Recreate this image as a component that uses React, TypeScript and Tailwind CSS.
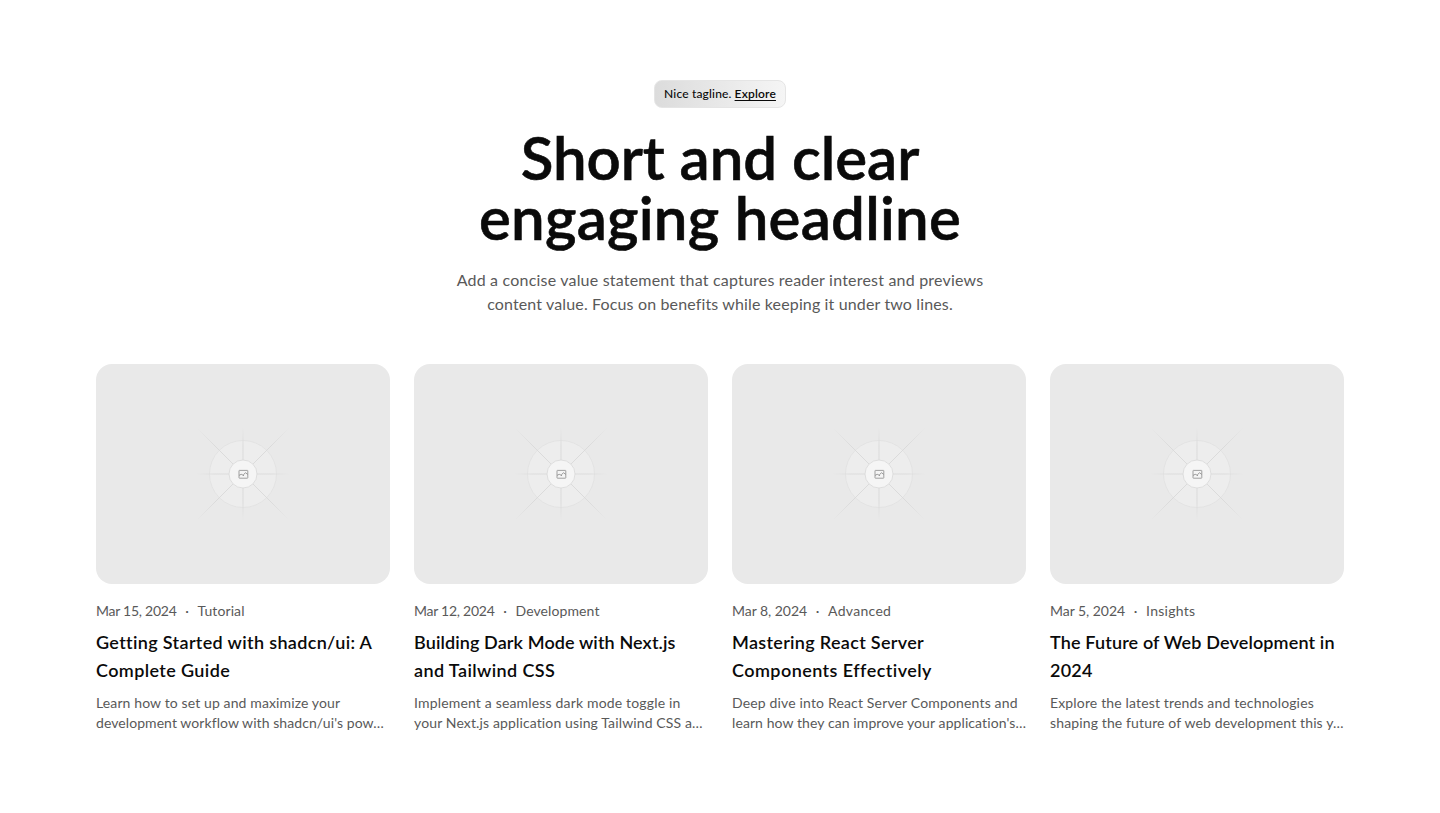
type Line = { text: string; tracking: string };

type Post = {
  date: Line;
  category: Line;
  title: Line[];
  excerpt: Line[];
};

const posts: Post[] = [
  {
    date: { text: "Mar 15, 2024", tracking: "tracking-[-0.26px]" },
    category: { text: "Tutorial", tracking: "tracking-[0.1px]" },
    title: [
      { text: "Getting Started with shadcn/ui: A", tracking: "tracking-[0.34px]" },
      { text: "Complete Guide", tracking: "tracking-[0.38px]" },
    ],
    excerpt: [
      { text: "Learn how to set up and maximize your", tracking: "tracking-[0.12px]" },
      { text: "development workflow with shadcn/ui's pow…", tracking: "tracking-[0.07px]" },
    ],
  },
  {
    date: { text: "Mar 12, 2024", tracking: "tracking-[-0.26px]" },
    category: { text: "Development", tracking: "tracking-[0.1px]" },
    title: [
      { text: "Building Dark Mode with Next.js", tracking: "tracking-[0.11px]" },
      { text: "and Tailwind CSS", tracking: "tracking-[0.4px]" },
    ],
    excerpt: [
      { text: "Implement a seamless dark mode toggle in", tracking: "tracking-[0.17px]" },
      { text: "your Next.js application using Tailwind CSS a…", tracking: "tracking-[0.13px]" },
    ],
  },
  {
    date: { text: "Mar 8, 2024", tracking: "tracking-[-0.04px]" },
    category: { text: "Advanced", tracking: "tracking-[0.3px]" },
    title: [
      { text: "Mastering React Server", tracking: "tracking-[0.31px]" },
      { text: "Components Effectively", tracking: "tracking-[0.44px]" },
    ],
    excerpt: [
      { text: "Deep dive into React Server Components and", tracking: "tracking-[0.16px]" },
      { text: "learn how they can improve your application's…", tracking: "tracking-[0.09px]" },
    ],
  },
  {
    date: { text: "Mar 5, 2024", tracking: "tracking-[-0.04px]" },
    category: { text: "Insights", tracking: "tracking-[0.28px]" },
    title: [
      { text: "The Future of Web Development in", tracking: "tracking-[0.14px]" },
      { text: "2024", tracking: "tracking-[0.2px]" },
    ],
    excerpt: [
      { text: "Explore the latest trends and technologies", tracking: "tracking-[0.15px]" },
      { text: "shaping the future of web development this y…", tracking: "tracking-[0.13px]" },
    ],
  },
];

function Lines({ lines }: { lines: Line[] }) {
  return (
    <>
      {lines.map((line) => (
        <span key={line.text} className={`block whitespace-nowrap ${line.tracking}`}>
          {line.text}
        </span>
      ))}
    </>
  );
}

function Placeholder() {
  return (
    <div className="flex h-[220px] items-center justify-center rounded-2xl bg-[#e9e9e9]">
      <svg width="100" height="100" viewBox="0 0 100 100" fill="none">
        <defs>
          <radialGradient id="ray" gradientUnits="userSpaceOnUse" cx="50" cy="50" r="65">
            <stop offset="0.6" stopColor="#d9d9d9" />
            <stop offset="1" stopColor="#d9d9d9" stopOpacity="0" />
          </radialGradient>
          <radialGradient id="axis" gradientUnits="userSpaceOnUse" cx="50" cy="50" r="47">
            <stop offset="0.6" stopColor="#dcdcdc" />
            <stop offset="1" stopColor="#dcdcdc" stopOpacity="0" />
          </radialGradient>
        </defs>
        <circle cx="50" cy="50" r="33.5" fill="#ededed" stroke="#e1e1e1" strokeWidth="0.8" />
        <path d="M4 4 96 96M4 96 96 4" stroke="url(#ray)" strokeWidth="0.9" />
        <path d="M50 4V96M4 50H96" stroke="url(#axis)" strokeWidth="1.1" />
        <circle cx="50" cy="50" r="14" fill="#f5f5f5" stroke="#d8d8d8" strokeWidth="0.8" />
        <rect x="46" y="46.4" width="8.8" height="7.8" rx="0.4" stroke="#969696" strokeWidth="0.9" />
        <path
          d="M46 51.4 48.2 50.3 50.2 51.2 51 50.2 52.4 48.7 54.8 50.4M50 51l1 1"
          stroke="#868686"
          strokeWidth="0.8"
        />
      </svg>
    </div>
  );
}

function PostCard({ post }: { post: Post }) {
  return (
    <article className="flex min-w-0 flex-col">
      <Placeholder />
      <div className="mt-[17px] flex gap-2 text-sm leading-5 text-[#595959]">
        <span className={post.date.tracking}>{post.date.text}</span>
        <span className="w-[5px] text-center">·</span>
        <span className={post.category.tracking}>{post.category.text}</span>
      </div>
      <h2 className="mt-[7px] text-lg leading-7 font-semibold text-[#0a0a0a]">
        <Lines lines={post.title} />
      </h2>
      <p className="mt-[9px] text-sm leading-5 text-[#595959]">
        <Lines lines={post.excerpt} />
      </p>
    </article>
  );
}

export default function App() {
  return (
    <main className="min-h-[813px] bg-white px-24 pt-20 font-[Lato,sans-serif]">
      <header className="flex flex-col items-center text-center">
        <div className="flex h-7 w-[132px] items-center justify-center gap-[3px] rounded-lg border border-[#e5e5e5] bg-linear-to-r from-[#dcdcdc] to-[#f5f5f5] text-xs leading-4 font-medium whitespace-nowrap text-[#0a0a0a]">
          <span className="tracking-[0.17px]">Nice tagline.</span>
          <a href="#" className="font-semibold tracking-[0.17px] underline decoration-1 underline-offset-2">
            Explore
          </a>
        </div>
        <h1 className="mt-[19px] text-[60px] leading-[60px] font-semibold text-[#0a0a0a] [-webkit-text-stroke:0.6px_#0a0a0a]">
          <Lines
            lines={[
              { text: "Short and clear", tracking: "tracking-[-0.05px]" },
              { text: "engaging headline", tracking: "tracking-[0.25px]" },
            ]}
          />
        </h1>
        <p className="mt-[21px] text-base leading-6 text-[#595959]">
          <Lines
            lines={[
              {
                text: "Add a concise value statement that captures reader interest and previews",
                tracking: "tracking-[0.2px]",
              },
              {
                text: "content value. Focus on benefits while keeping it under two lines.",
                tracking: "tracking-[0.14px]",
              },
            ]}
          />
        </p>
      </header>
      <section className="mt-12 grid grid-cols-4 gap-6">
        {posts.map((post) => (
          <PostCard key={post.title[0].text} post={post} />
        ))}
      </section>
    </main>
  );
}
